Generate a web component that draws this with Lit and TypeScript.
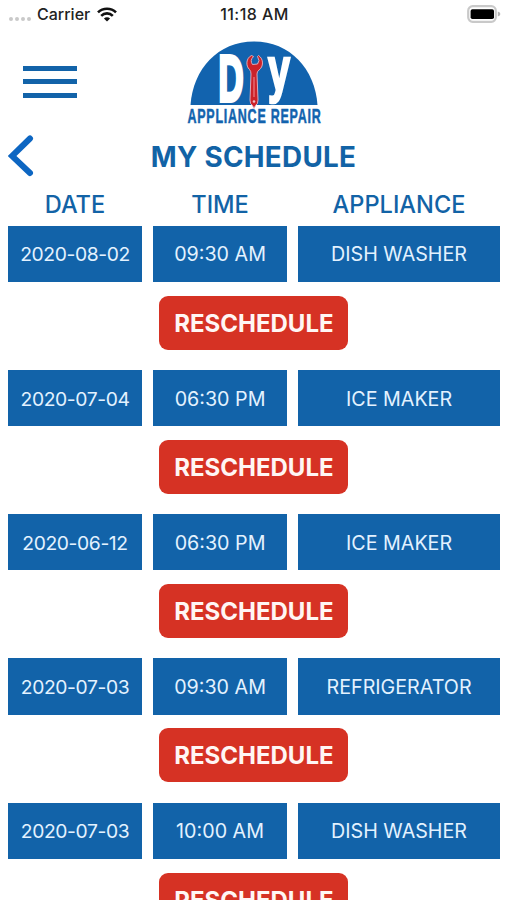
import { LitElement, html, css } from "lit";
import { customElement, property } from "lit/decorators.js";

interface Visit {
  date: string;
  time: string;
  appliance: string;
}

const visits: Visit[] = [
  { date: "2020-08-02", time: "09:30 AM", appliance: "DISH WASHER" },
  { date: "2020-07-04", time: "06:30 PM", appliance: "ICE MAKER" },
  { date: "2020-06-12", time: "06:30 PM", appliance: "ICE MAKER" },
  { date: "2020-07-03", time: "09:30 AM", appliance: "REFRIGERATOR" },
  { date: "2020-07-03", time: "10:00 AM", appliance: "DISH WASHER" },
];

@customElement("status-bar")
class StatusBar extends LitElement {
  static styles = css`
    :host {
      display: grid;
      grid-template-columns: 1fr auto 1fr;
      align-items: center;
      height: 28px;
      padding: 0 6px 0 8px;
      color: #222;
      font-size: 16px;
      font-weight: 500;
    }
    .left { display: flex; align-items: center; }
    .dots { display: flex; gap: 2px; margin: 9px 6px 0 1px; }
    .dot { width: 4px; height: 4px; border-radius: 50%; background: #c9c9c9; }
    .wifi { margin-left: 7px; }
    .clock { letter-spacing: 0.45px; }
    .battery { justify-self: end; }
    svg { display: block; }
  `;
  render() {
    return html`
      <div class="left">
        <span class="dots"><i class="dot"></i><i class="dot"></i><i class="dot"></i><i class="dot"></i></span>
        <span>Carrier</span>
        <svg class="wifi" width="20" height="15" viewBox="0 0 20 15">
          <g fill="none" stroke="#111" stroke-width="2.6">
            <path d="M1 5.4a12.8 12.8 0 0 1 18 0" />
            <path d="M4.2 8.8a8.2 8.2 0 0 1 11.6 0" />
          </g>
          <path d="M10 14.6L6.9 11.5a4.4 4.4 0 0 1 6.2 0z" fill="#111" />
        </svg>
      </div>
      <span class="clock">11:18 AM</span>
      <svg class="battery" width="34" height="18" viewBox="0 0 34 18">
        <rect x="1.2" y="1.2" width="27.6" height="15.6" rx="4.5" fill="#fff" stroke="#c9c9c9" stroke-width="2.2" />
        <rect x="3.6" y="4.2" width="23.4" height="9.8" rx="1.8" fill="#000" />
        <path d="M30.8 6.6q2.6 .6 2.6 2.4t-2.6 2.4z" fill="#b5b5b5" />
      </svg>
    `;
  }
}

@customElement("brand-logo")
class BrandLogo extends LitElement {
  static styles = css`
    :host { display: block; }
    svg { display: block; overflow: visible; }
    .word { font-family: "Liberation Sans", Arial, sans-serif; font-weight: 700; }
  `;
  render() {
    return html`
      <svg width="150" height="94" viewBox="0 0 150 94">
        <path d="M10.5 67C13 31 38 3.5 74 3.5S135 31 137.5 67z" fill="#1263ae" />
        <g class="word" fill="#fff" stroke="#fff">
          <text x="38.5" y="63" font-size="64" stroke-width="4" textLength="25" lengthAdjust="spacingAndGlyphs">D</text>
          <text x="88" y="51.5" font-size="61" stroke-width="2.6" textLength="22" lengthAdjust="spacingAndGlyphs">y</text>
        </g>
        <path d="M71.5 17.5C66 20 65.5 28 69.5 31.5Q71 33 71 36L70 62Q70 66.5 72.5 67.5L74 70.5 75.5 67.5Q78 66.5 78 62L77 36Q77 33.5 79 32C83.5 29 84 21 78.5 17.5L77.5 18.5Q80.5 23 77.5 26L72.5 26.5Q69.5 22.5 73.5 18.5z"
          fill="#cb2229" stroke="#e4b6c2" stroke-width=".9" stroke-linejoin="round" />
        <path d="M74 39v20" stroke="#e97e84" stroke-width="1.2" />
        <circle cx="74" cy="63.5" r="1.3" fill="#f0bcc4" />
        <g class="word" fill="#1263ae" stroke="#1263ae" stroke-width=".5">
          <text x="7.5" y="84.6" font-size="20" textLength="134" lengthAdjust="spacingAndGlyphs" letter-spacing="1.2">APPLIANCE REPAIR</text>
        </g>
      </svg>
    `;
  }
}

@customElement("visit-row")
class VisitRow extends LitElement {
  @property({ attribute: false }) visit!: Visit;
  static styles = css`
    :host { display: block; height: 144.25px; }
    .cells { display: grid; grid-template-columns: 134px 134.5px 201.9px; column-gap: 10.8px; }
    .cell {
      display: flex;
      align-items: center;
      justify-content: center;
      height: 56.4px;
      box-sizing: border-box;
      padding-top: 1px;
      background: #1263a9;
      color: #e3f2ff;
      font-size: 19.7px;
      white-space: nowrap;
    }
    .date { font-size: 19.3px; letter-spacing: -0.4px; }
    .action {
      display: block;
      width: 189px;
      height: 54px;
      margin: 13.7px 0 0 151.4px;
      padding: 1px 0 0;
      border: 0;
      border-radius: 9px;
      background: #d63224;
      color: #fff6f4;
      font: inherit;
      font-size: 24px;
      font-weight: 700;
    }
  `;
  render() {
    const { date, time, appliance } = this.visit;
    return html`
      <div class="cells">
        <div class="cell date">${date}</div>
        <div class="cell">${time}</div>
        <div class="cell">${appliance}</div>
      </div>
      <button class="action">RESCHEDULE</button>
    `;
  }
}

@customElement("app-root")
class AppRoot extends LitElement {
  static styles = css`
    :host {
      display: block;
      height: 900px;
      overflow: hidden;
      background: #fff;
      color: #1263a6;
      font-family: Inter, "Liberation Sans", sans-serif;
    }
    header { display: grid; grid-template-columns: 180px 150px 1fr; height: 100px; padding-top: 10px; box-sizing: border-box; }
    .menu { display: flex; flex-direction: column; gap: 8.5px; width: 54px; margin: 27.6px 0 0 22.6px; }
    .bar { height: 5px; background: #1263a9; }
    .title { display: grid; grid-template-columns: 36px 1fr 36px; align-items: center; height: 56px; }
    h1 { margin: 0; padding-top: 2px; text-align: center; font-size: 27.8px; font-weight: 650; letter-spacing: 0.3px; }
    .back { display: block; margin-left: 8px; }
    .heads {
      display: grid;
      grid-template-columns: 134px 134.5px 201.9px;
      column-gap: 10.8px;
      height: 41.6px;
      padding-left: 8px;
      text-align: center;
      font-size: 23.6px;
      font-weight: 500;
      line-height: 41px;
    }
    .list { padding-left: 8px; }
  `;
  render() {
    return html`
      <status-bar></status-bar>
      <header>
        <div class="menu"><div class="bar"></div><div class="bar"></div><div class="bar"></div></div>
        <brand-logo></brand-logo>
      </header>
      <div class="title">
        <svg class="back" width="26" height="42" viewBox="0 0 26 42">
          <path d="M22 3.5L4 21l18 17" fill="none" stroke="#0d66c2" stroke-width="6" stroke-linecap="round" />
        </svg>
        <h1>MY SCHEDULE</h1>
      </div>
      <div class="heads"><span>DATE</span><span>TIME</span><span>APPLIANCE</span></div>
      <div class="list">${visits.map((v) => html`<visit-row .visit=${v}></visit-row>`)}</div>
    `;
  }
}
